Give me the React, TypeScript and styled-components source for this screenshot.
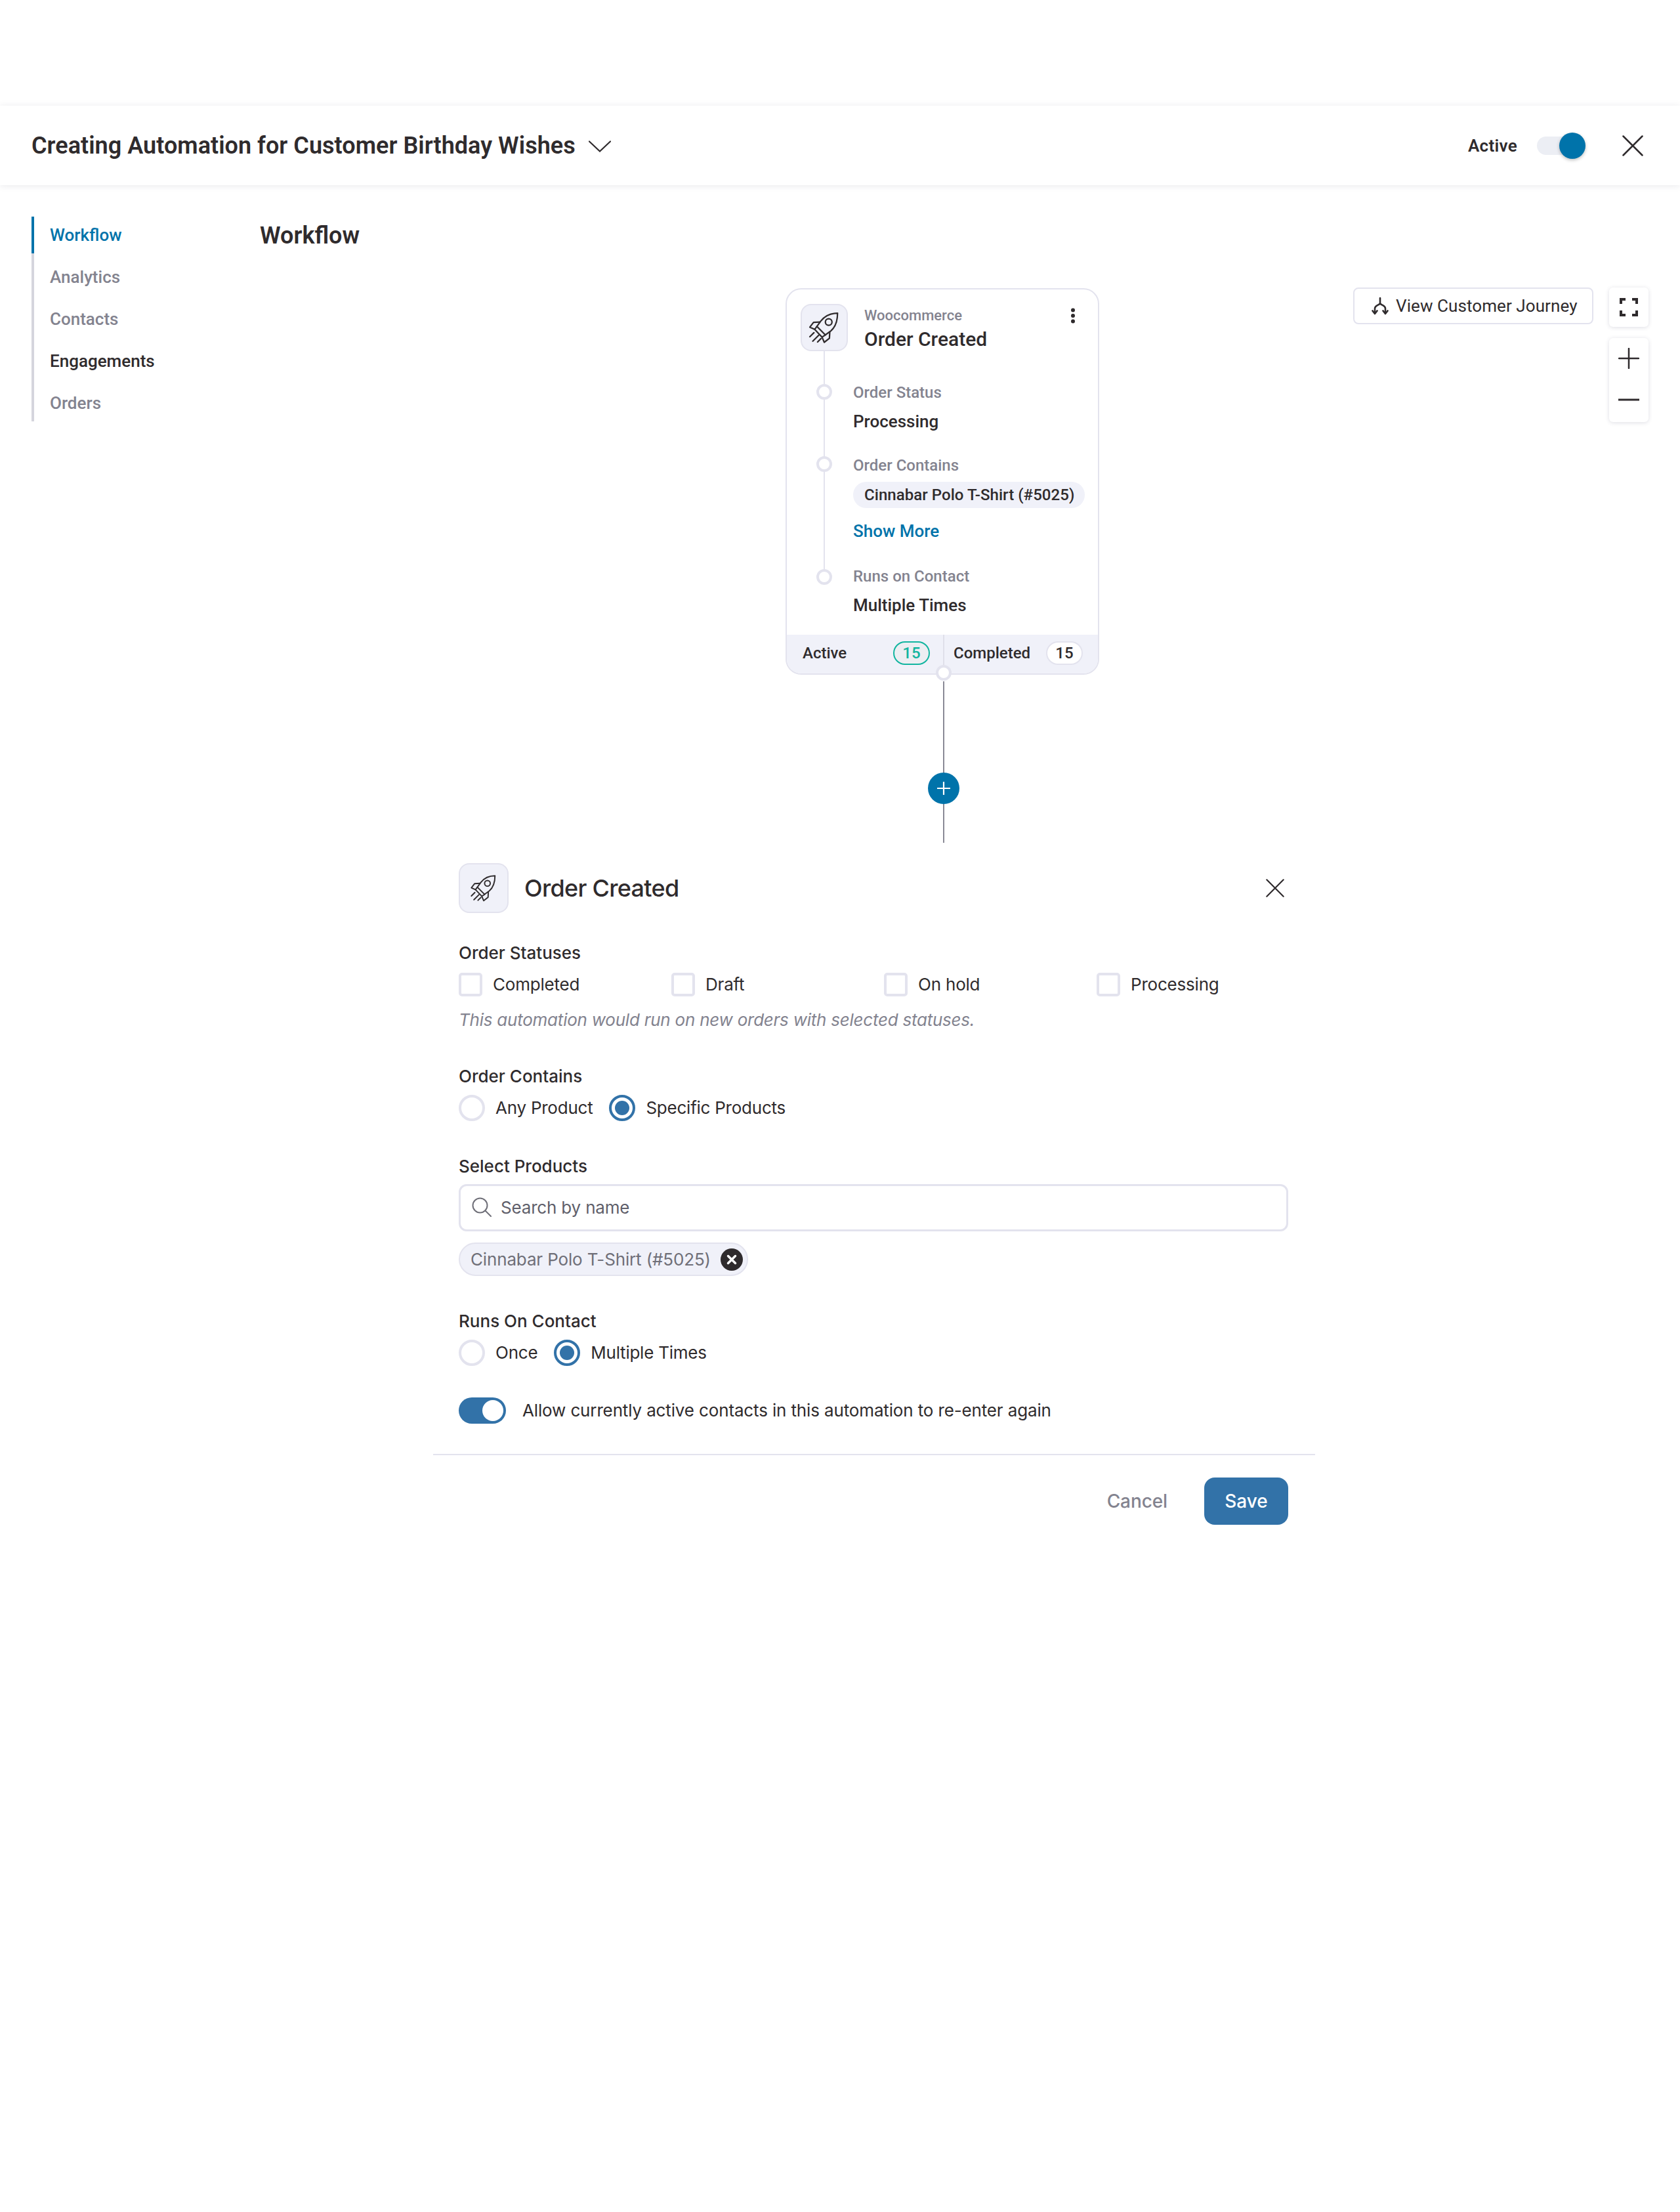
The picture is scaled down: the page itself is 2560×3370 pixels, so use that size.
import styled, { createGlobalStyle } from 'styled-components';

const GlobalStyle = createGlobalStyle`
  html, body {
    margin: 0;
    padding: 0;
    background: #ffffff;
  }
  *, *::before, *::after {
    box-sizing: border-box;
  }
`;

const ink = '#2f2b2d';
const muted = '#83838f';
const line = '#e3e3ee';
const soft = '#f0f1f9';
const brand = '#0073aa';
const formBlue = '#3272a8';

const Page = styled.div`
  width: 2560px;
  height: 3370px;
  background: #ffffff;
  color: ${ink};
  font-family: Roboto, 'Liberation Sans', sans-serif;
  padding-top: 161px;
  overflow: hidden;
`;

/* top bar */
const Header = styled.header`
  height: 121px;
  display: flex;
  align-items: center;
  padding: 0 56px 0 48px;
  background: #ffffff;
  box-shadow: 0 1px 10px rgba(40, 40, 70, 0.1);
`;
const Title = styled.h1`
  margin: 0;
  font-size: 36px;
  font-weight: 600;
  line-height: 44px;
  letter-spacing: 0.04px;
`;
const TitleChevron = styled.svg`
  width: 34px;
  height: 18px;
  margin-left: 20px;
  margin-top: 2px;
`;
const HeaderRight = styled.div`
  margin-left: auto;
  display: flex;
  align-items: center;
`;
const ActiveLabel = styled.span`
  font-size: 26px;
  font-weight: 600;
  letter-spacing: 0.3px;
  margin-right: 30px;
`;
const TopToggle = styled.span`
  position: relative;
  width: 66px;
  height: 28px;
  border-radius: 14px;
  background: #eceef4;
  margin-right: 64px;
`;
const TopKnob = styled.span`
  position: absolute;
  right: -8px;
  top: -6px;
  width: 40px;
  height: 40px;
  border-radius: 50%;
  background: ${brand};
  box-shadow: 0 2px 5px rgba(0, 0, 0, 0.25);
`;

/* body */
const Body = styled.div`
  display: flex;
  height: 1001px;
`;
const Sidebar = styled.nav`
  flex: none;
  width: 349px;
  margin-left: 48px;
  padding-top: 48px;
`;
const SideList = styled.ul`
  list-style: none;
  margin: 0;
  padding: 0;
  display: flex;
  flex-direction: column;
  gap: 8px;
  border-left: 4px solid #d5d5dd;
  width: 260px;
`;
const SideItem = styled.li<{ $active?: boolean; $dark?: boolean }>`
  height: 56px;
  display: flex;
  align-items: center;
  padding-left: 24px;
  margin-left: -4px;
  border-left: 4px solid ${(p) => (p.$active ? brand : 'transparent')};
  font-size: 26px;
  font-weight: 500;
  color: ${(p) => (p.$active ? brand : p.$dark ? ink : muted)};
`;
const Main = styled.main`
  flex: 1;
  position: relative;
  padding-top: 57px;
`;
const Heading = styled.h2`
  margin: 0 0 0 -1px;
  font-size: 36px;
  font-weight: 600;
  line-height: 40px;
`;
const NodeStack = styled.div`
  width: 478px;
  margin: 60px 0 0 800px;
  display: flex;
  flex-direction: column;
`;

/* trigger card */
const Card = styled.section`
  position: relative;
  height: 589px;
  border: 2px solid ${line};
  border-radius: 24px;
  background: #ffffff;
  display: flex;
  flex-direction: column;
`;
const CardHead = styled.div`
  display: flex;
  padding: 22px 0 0 21px;
`;
const IconBox = styled.div<{ $size: number }>`
  flex: none;
  width: ${(p) => p.$size}px;
  height: ${(p) => p.$size}px;
  border: 2px solid ${line};
  border-radius: 16px;
  background: ${soft};
  display: flex;
  align-items: center;
  justify-content: center;
`;
const HeadText = styled.div`
  margin-left: 25px;
  padding-top: 4px;
`;
const Vendor = styled.div`
  font-size: 22px;
  line-height: 28px;
  font-weight: 500;
  color: ${muted};
`;
const NodeName = styled.div`
  margin-top: 2px;
  font-size: 30px;
  line-height: 40px;
  font-weight: 500;
`;
const Kebab = styled.svg`
  position: absolute;
  top: 28px;
  left: 432px;
  width: 8px;
  height: 24px;
`;
const Steps = styled.div`
  position: relative;
  flex: 1;
  padding: 45px 0 0 101px;
  &::before {
    content: '';
    position: absolute;
    left: 56px;
    top: -2px;
    height: 344px;
    width: 2px;
    background: ${line};
  }
`;
const Step = styled.div<{ $gap: number; $dot: number }>`
  position: relative;
  margin-bottom: ${(p) => p.$gap}px;
  &::before {
    content: '';
    position: absolute;
    left: -56px;
    top: ${(p) => p.$dot}px;
    width: 24px;
    height: 24px;
    border-radius: 50%;
    border: 4px solid ${line};
    background: #ffffff;
  }
`;
const StepLabel = styled.div`
  font-size: 24px;
  line-height: 32px;
  font-weight: 500;
  color: ${muted};
`;
const StepValue = styled.div`
  margin-top: 12px;
  font-size: 26px;
  line-height: 32px;
  font-weight: 500;
`;
const ValueChip = styled.div`
  width: fit-content;
  margin-top: 9px;
  height: 40px;
  padding: 0 16px 0 17px;
  border-radius: 20px;
  background: ${soft};
  font-size: 24px;
  line-height: 40px;
  font-weight: 500;
  letter-spacing: 0.05px;
  white-space: nowrap;
`;
const ShowMore = styled.div`
  margin-top: 19px;
  font-size: 26px;
  line-height: 32px;
  font-weight: 500;
  color: ${brand};
`;
const CardFoot = styled.div`
  flex: none;
  height: 59px;
  background: ${soft};
  border-radius: 0 0 22px 22px;
  display: grid;
  grid-template-columns: 238px 1fr;
`;
const FootCell = styled.div<{ $right?: boolean }>`
  display: flex;
  align-items: center;
  justify-content: space-between;
  padding: ${(p) => (p.$right ? '0 23px 4px 14px' : '0 20px 4px 24px')};
  font-size: 24px;
  font-weight: 500;
  border-left: ${(p) => (p.$right ? `2px solid #e0e0ea` : 'none')};
`;
const Count = styled.span<{ $teal?: boolean }>`
  width: 56px;
  height: 36px;
  border-radius: 18px;
  border: 2px solid ${(p) => (p.$teal ? '#12b5a0' : line)};
  background: ${(p) => (p.$teal ? '#eceef2' : '#ffffff')};
  color: ${(p) => (p.$teal ? '#12b5a0' : ink)};
  display: flex;
  align-items: center;
  justify-content: center;
  font-size: 24px;
  font-weight: 500;
`;
const Port = styled.span`
  position: absolute;
  left: 227px;
  bottom: -11px;
  width: 24px;
  height: 24px;
  border-radius: 50%;
  border: 4px solid ${line};
  background: #ffffff;
`;
const Connector = styled.div`
  position: relative;
  margin: 10px 0 0 240px;
  width: 2px;
  height: 246px;
  background: #8a8a96;
`;
const AddButton = styled.button`
  position: absolute;
  left: -23px;
  top: 139px;
  width: 48px;
  height: 48px;
  padding: 0;
  border: 0;
  border-radius: 50%;
  background: ${brand};
  display: flex;
  align-items: center;
  justify-content: center;
`;

/* canvas tools */
const JourneyButton = styled.button`
  position: absolute;
  left: 1665px;
  top: 156px;
  width: 366px;
  height: 56px;
  padding: 0 0 0 26px;
  border: 2px solid ${line};
  border-radius: 8px;
  background: #ffffff;
  display: flex;
  align-items: center;
  gap: 11px;
  font-family: Roboto, sans-serif;
  font-size: 26px;
  letter-spacing: 0.08px;
  color: ${ink};
`;
const ToolBox = styled.div`
  position: absolute;
  left: 2055px;
  top: 156px;
  width: 60px;
  height: 60px;
  border-radius: 6px;
  background: #ffffff;
  box-shadow: 0 1px 6px rgba(50, 50, 90, 0.16);
  display: flex;
  align-items: center;
  justify-content: center;
`;
const ZoomBox = styled(ToolBox)`
  top: 233px;
  height: 128px;
  flex-direction: column;
  justify-content: flex-start;
  padding-top: 15px;
  gap: 45px;
`;

/* settings form */
const Panel = styled.section`
  width: 1344px;
  margin-left: 660px;
  font-family: Inter, 'Liberation Sans', sans-serif;
`;
const PanelBody = styled.div`
  padding: 32px 41px 0 39px;
`;
const PanelHead = styled.div`
  display: flex;
  align-items: center;
  height: 76px;
`;
const PanelTitle = styled.h3`
  margin: 0 0 0 24px;
  font-size: 36px;
  line-height: 44px;
  font-weight: 500;
  letter-spacing: -0.7px;
`;
const PanelClose = styled.svg`
  margin-left: auto;
  margin-right: 6px;
  width: 28px;
  height: 28px;
`;
const Field = styled.div<{ $top: number }>`
  margin-top: ${(p) => p.$top}px;
`;
const FieldLabel = styled.div`
  font-size: 26px;
  line-height: 32px;
  font-weight: 500;
`;
const CheckGrid = styled.div`
  display: grid;
  grid-template-columns: repeat(4, 324px);
  margin-top: 14px;
`;
const CheckItem = styled.label`
  display: flex;
  align-items: center;
  gap: 16px;
  font-size: 26px;
  line-height: 36px;
  letter-spacing: -0.2px;
`;
const CheckBox = styled.span`
  width: 36px;
  height: 36px;
  border: 4px solid ${line};
  border-radius: 5px;
  background: #ffffff;
`;
const Hint = styled.p`
  margin: 20px 0 0;
  font-size: 26px;
  line-height: 32px;
  font-style: italic;
  letter-spacing: -0.24px;
  color: ${muted};
`;
const RadioRow = styled.div`
  display: flex;
  margin-top: 12px;
  gap: 25px;
`;
const RadioItem = styled.label`
  display: flex;
  align-items: center;
  gap: 16px;
  font-size: 26px;
  line-height: 40px;
  letter-spacing: -0.24px;
`;
const RadioMark = styled.span<{ $on?: boolean }>`
  width: 40px;
  height: 40px;
  border-radius: 50%;
  border: 4px solid ${(p) => (p.$on ? formBlue : line)};
  display: flex;
  align-items: center;
  justify-content: center;
  &::after {
    content: '';
    width: 22px;
    height: 22px;
    border-radius: 50%;
    background: ${(p) => (p.$on ? formBlue : 'transparent')};
  }
`;
const SearchBox = styled.div`
  margin-top: 11px;
  height: 72px;
  border: 3px solid ${line};
  border-radius: 12px;
  display: flex;
  align-items: center;
  gap: 14px;
  padding: 0 0 2px 17px;
  font-size: 26px;
  letter-spacing: -0.18px;
  color: #5f5f6b;
`;
const ProductTag = styled.div`
  width: fit-content;
  display: flex;
  align-items: center;
  margin-top: 17px;
  height: 51px;
  padding: 0 6px 0 16px;
  border: 2px solid ${line};
  border-radius: 26px;
  background: ${soft};
  font-size: 26px;
  letter-spacing: -0.15px;
  color: #6f6f78;
  gap: 15px;
`;
const TagRemove = styled.svg`
  width: 34px;
  height: 34px;
`;
const SwitchRow = styled.div`
  display: flex;
  align-items: center;
  gap: 25px;
  margin-top: 48px;
  font-size: 26px;
  line-height: 40px;
  letter-spacing: -0.14px;
`;
const FormSwitch = styled.span`
  width: 72px;
  height: 40px;
  border-radius: 20px;
  background: ${formBlue};
  display: flex;
  align-items: center;
  justify-content: flex-end;
  padding-right: 4px;
  &::after {
    content: '';
    width: 32px;
    height: 32px;
    border-radius: 50%;
    background: #ffffff;
  }
`;
const PanelFoot = styled.div`
  margin-top: 46px;
  border-top: 2px solid ${line};
  display: flex;
  align-items: center;
  justify-content: flex-end;
  padding: 34px 41px 0 0;
  gap: 56px;
`;
const CancelButton = styled.button`
  border: 0;
  padding: 0;
  background: none;
  font-family: Inter, sans-serif;
  font-size: 28px;
  font-weight: 500;
  letter-spacing: -0.1px;
  color: ${muted};
`;
const SaveButton = styled.button`
  width: 128px;
  height: 72px;
  border: 0;
  border-radius: 16px;
  background: ${formBlue};
  color: #ffffff;
  font-family: Inter, sans-serif;
  font-size: 28px;
  font-weight: 500;
`;

const RocketIcon = ({ size }: { size: number }) => (
  <svg width={size} height={size} viewBox="0 0 48 48" fill="none" stroke={ink} strokeWidth="2" strokeLinejoin="round" strokeLinecap="round">
    <path d="M42 4.500C33 4.500 25 8 19.500 15L14 22.500L25.500 34L33 28.500C39.500 23 42 14 42 4.500Z" />
    <circle cx="30" cy="16.500" r="4.500" />
    <path d="M18 16.500L9.500 17L4.500 23.500L11 26.500L14 22.500" />
    <path d="M31.500 30L31 38.500L24 44L21 37L25.500 34" />
    <path d="M11 26.500L21 37" />
    <path d="M4.500 36.500L10 31M8.500 42.500L16.500 34.500M15 43.500L19.500 39" />
  </svg>
);

const CloseIcon = ({ size }: { size: number }) => (
  <svg width={size} height={size} viewBox="0 0 32 32" fill="none" stroke={ink} strokeWidth="2.500" strokeLinecap="round">
    <path d="M1.500 1.500L30.500 30.500M30.500 1.500L1.500 30.500" />
  </svg>
);

const JourneyIcon = () => (
  <svg width="26" height="27" viewBox="0 0 26 27" fill="none" stroke={ink} strokeWidth="2.600" strokeLinecap="round" strokeLinejoin="round">
    <path d="M13 1V9.500" />
    <path d="M5 24V17C5 12.500 9 13 13 9.500C17 13 21 12.500 21 17V24" />
    <path d="M1.500 20.500L5 25L8.500 20.500M17.500 20.500L21 25L24.500 20.500" />
  </svg>
);

const FullscreenIcon = () => (
  <svg width="28" height="28" viewBox="0 0 28 28" fill="none" stroke={ink} strokeWidth="4">
    <path d="M2 9V2H9M19 2H26V9M26 19V26H19M9 26H2V19" />
  </svg>
);

const PlusIcon = ({ size, color, weight }: { size: number; color: string; weight: number }) => (
  <svg width={size} height={size} viewBox="0 0 32 32" fill="none" stroke={color} strokeWidth={weight} strokeLinecap="round">
    <path d="M16 1V31M1 16H31" />
  </svg>
);

const MinusIcon = () => (
  <svg width="32" height="4" viewBox="0 0 32 4" fill="none" stroke={ink} strokeWidth="3">
    <path d="M0 2H32" />
  </svg>
);

const SearchIcon = () => (
  <svg width="30" height="30" viewBox="0 0 30 30" fill="none" stroke="#6f6f78" strokeWidth="2" strokeLinecap="round">
    <circle cx="12.500" cy="12.500" r="11" />
    <path d="M20.500 20.500L29 29" />
  </svg>
);

const statuses = ['Completed', 'Draft', 'On hold', 'Processing'];
const navItems = ['Workflow', 'Analytics', 'Contacts', 'Engagements', 'Orders'];

export default function App() {
  return (
    <>
      <GlobalStyle />
      <Page>
        <Header>
          <Title>Creating Automation for Customer Birthday Wishes</Title>
          <TitleChevron viewBox="0 0 34 18" fill="none" stroke={ink} strokeWidth="2.200" strokeLinecap="round">
            <path d="M1 1.500L17 16.500L33 1.500" />
          </TitleChevron>
          <HeaderRight>
            <ActiveLabel>Active</ActiveLabel>
            <TopToggle>
              <TopKnob />
            </TopToggle>
            <CloseIcon size={32} />
          </HeaderRight>
        </Header>

        <Body>
          <Sidebar>
            <SideList>
              {navItems.map((item) => (
                <SideItem key={item} $active={item === 'Workflow'} $dark={item === 'Engagements'}>
                  {item}
                </SideItem>
              ))}
            </SideList>
          </Sidebar>
          <Main>
            <Heading>Workflow</Heading>
            <NodeStack>
              <Card>
                <CardHead>
                  <IconBox $size={72}>
                    <RocketIcon size={54} />
                  </IconBox>
                  <HeadText>
                    <Vendor>Woocommerce</Vendor>
                    <NodeName>Order Created</NodeName>
                  </HeadText>
                </CardHead>
                <Kebab viewBox="0 0 8 24" fill={ink}>
                  <circle cx="4" cy="3.500" r="3" />
                  <circle cx="4" cy="12" r="3" />
                  <circle cx="4" cy="20.500" r="3" />
                </Kebab>
                <Steps>
                  <Step $gap={35} $dot={3}>
                    <StepLabel>Order Status</StepLabel>
                    <StepValue>Processing</StepValue>
                  </Step>
                  <Step $gap={37} $dot={2}>
                    <StepLabel>Order Contains</StepLabel>
                    <ValueChip>Cinnabar Polo T-Shirt (#5025)</ValueChip>
                    <ShowMore>Show More</ShowMore>
                  </Step>
                  <Step $gap={0} $dot={5}>
                    <StepLabel>Runs on Contact</StepLabel>
                    <StepValue>Multiple Times</StepValue>
                  </Step>
                </Steps>
                <CardFoot>
                  <FootCell>
                    Active
                    <Count $teal>15</Count>
                  </FootCell>
                  <FootCell $right>
                    Completed
                    <Count>15</Count>
                  </FootCell>
                </CardFoot>
                <Port />
              </Card>
              <Connector>
                <AddButton>
                  <PlusIcon size={20} color="#ffffff" weight={3.500} />
                </AddButton>
              </Connector>
            </NodeStack>
            <JourneyButton>
              <JourneyIcon />
              View Customer Journey
            </JourneyButton>
            <ToolBox>
              <FullscreenIcon />
            </ToolBox>
            <ZoomBox>
              <PlusIcon size={32} color={ink} weight={2.500} />
              <MinusIcon />
            </ZoomBox>
          </Main>
        </Body>

        <Panel>
          <PanelBody>
            <PanelHead>
              <IconBox $size={76}>
                <RocketIcon size={46} />
              </IconBox>
              <PanelTitle>Order Created</PanelTitle>
              <PanelClose viewBox="0 0 32 32" fill="none" stroke={ink} strokeWidth="2.500" strokeLinecap="round">
                <path d="M1.500 1.500L30.500 30.500M30.500 1.500L1.500 30.500" />
              </PanelClose>
            </PanelHead>

            <Field $top={45}>
              <FieldLabel>Order Statuses</FieldLabel>
              <CheckGrid>
                {statuses.map((status) => (
                  <CheckItem key={status}>
                    <CheckBox />
                    {status}
                  </CheckItem>
                ))}
              </CheckGrid>
              <Hint>This automation would run on new orders with selected statuses.</Hint>
            </Field>

            <Field $top={54}>
              <FieldLabel>Order Contains</FieldLabel>
              <RadioRow>
                <RadioItem>
                  <RadioMark />
                  Any Product
                </RadioItem>
                <RadioItem>
                  <RadioMark $on />
                  Specific Products
                </RadioItem>
              </RadioRow>
            </Field>

            <Field $top={53}>
              <FieldLabel>Select Products</FieldLabel>
              <SearchBox>
                <SearchIcon />
                Search by name
              </SearchBox>
              <ProductTag>
                Cinnabar Polo T-Shirt (#5025)
                <TagRemove viewBox="0 0 34 34">
                  <circle cx="17" cy="17" r="17" fill={ink} />
                  <path d="M11.500 11.500L22.500 22.500M22.500 11.500L11.500 22.500" stroke="#ffffff" strokeWidth="3.500" strokeLinecap="round" />
                </TagRemove>
              </ProductTag>
            </Field>

            <Field $top={53}>
              <FieldLabel>Runs On Contact</FieldLabel>
              <RadioRow>
                <RadioItem>
                  <RadioMark />
                  Once
                </RadioItem>
                <RadioItem>
                  <RadioMark $on />
                  Multiple Times
                </RadioItem>
              </RadioRow>
            </Field>

            <SwitchRow>
              <FormSwitch />
              Allow currently active contacts in this automation to re-enter again
            </SwitchRow>
          </PanelBody>
          <PanelFoot>
            <CancelButton>Cancel</CancelButton>
            <SaveButton>Save</SaveButton>
          </PanelFoot>
        </Panel>
      </Page>
    </>
  );
}
